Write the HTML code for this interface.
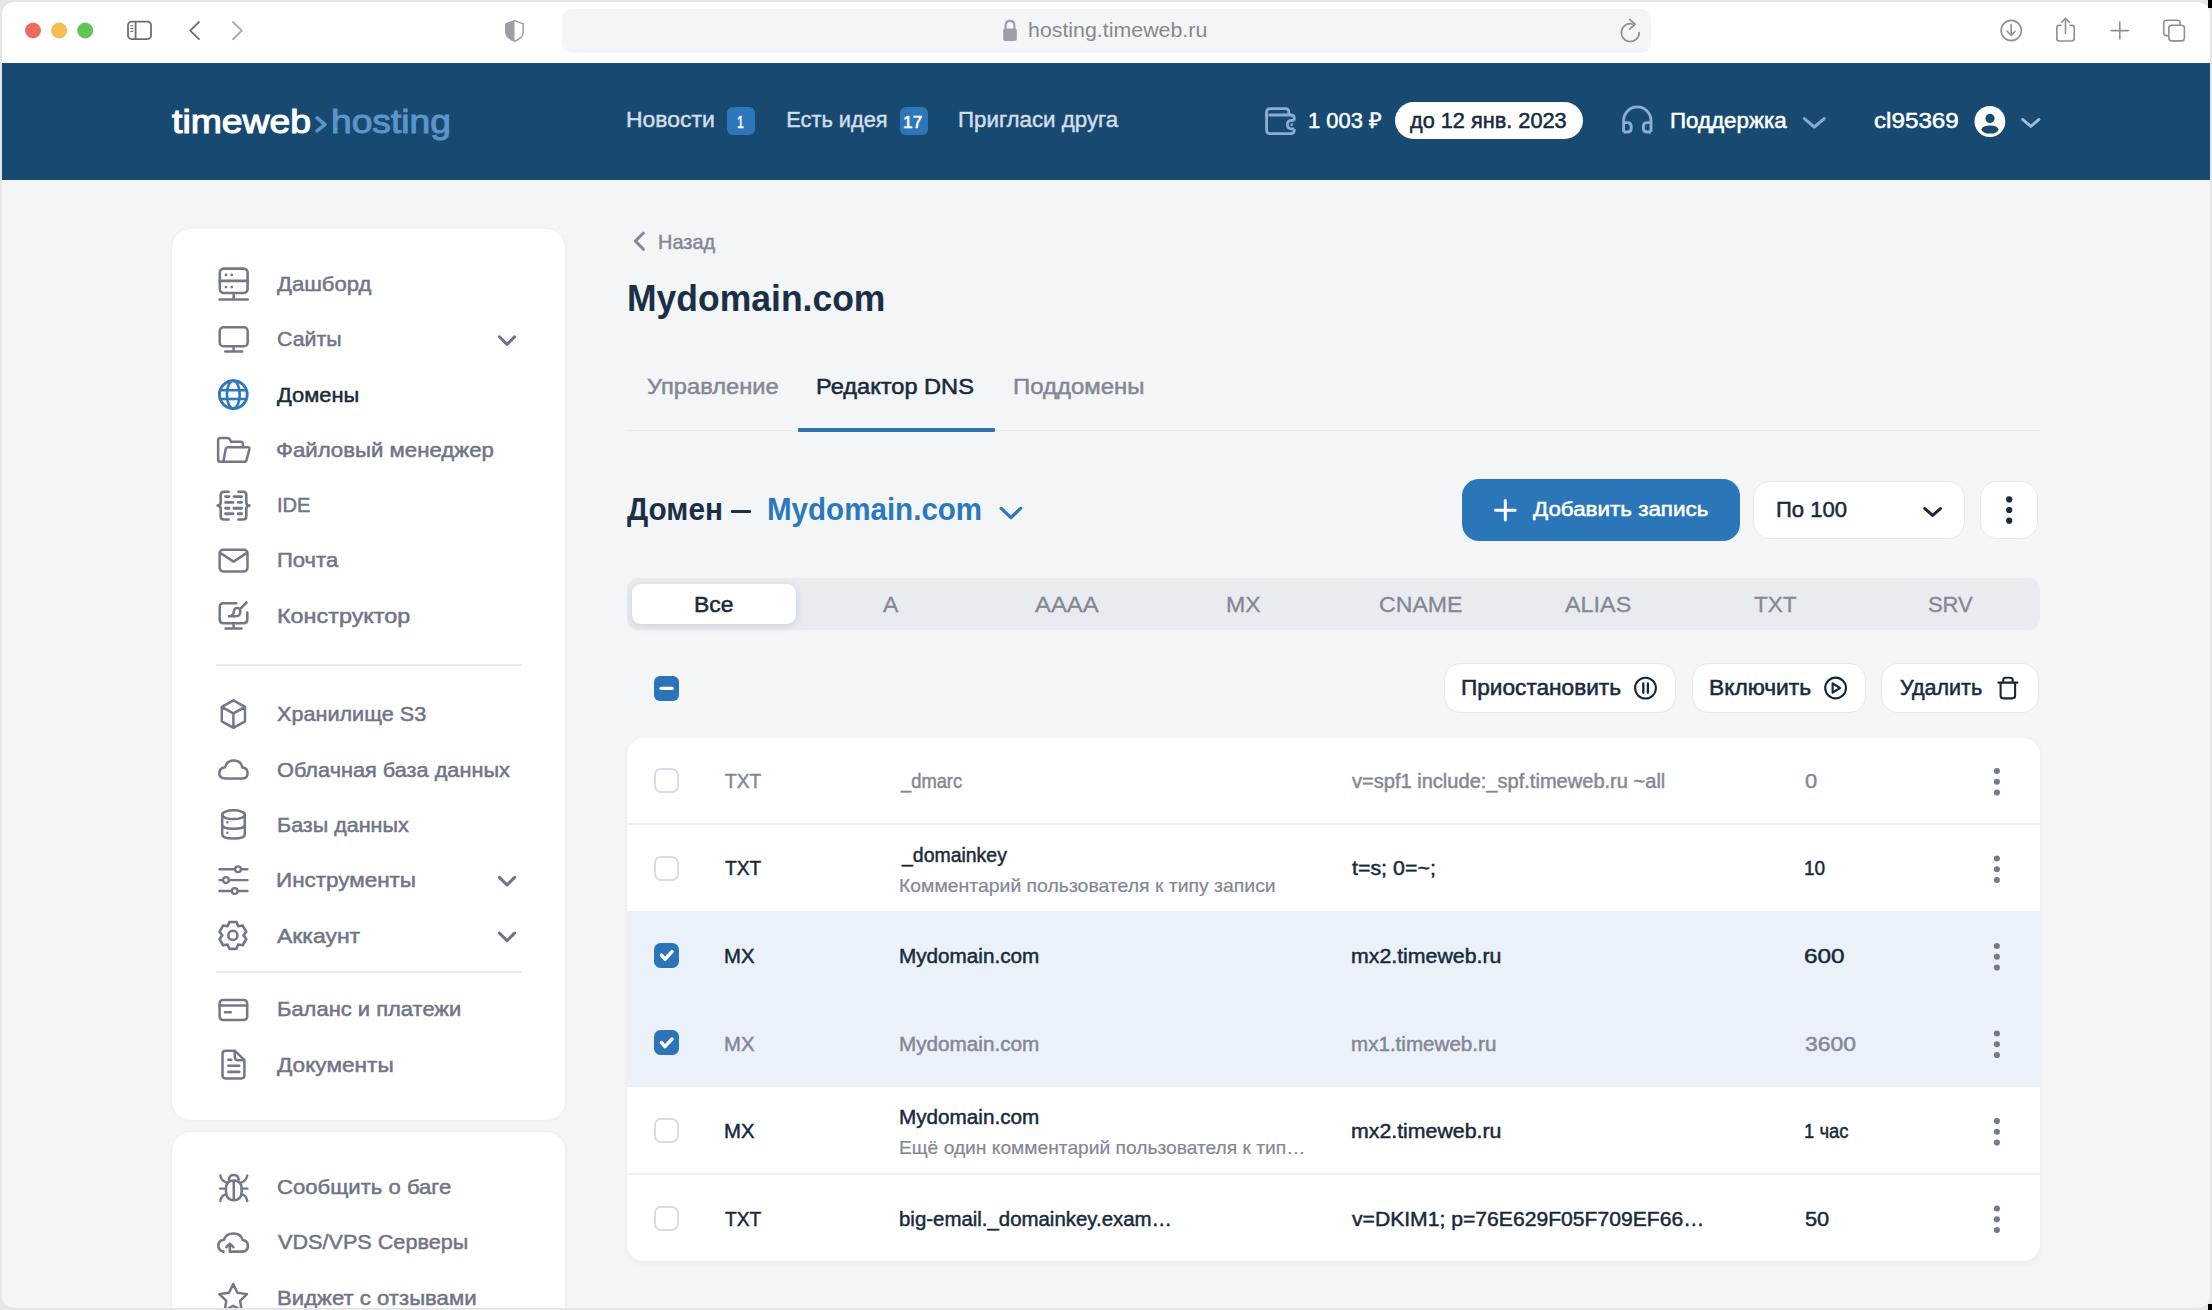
<!DOCTYPE html>
<html><head><meta charset="utf-8"><title>timeweb hosting</title>
<style>
html,body{margin:0;padding:0;}
body{width:2212px;height:1310px;overflow:hidden;background:#e6e6e8;position:relative;font-family:"Liberation Sans",sans-serif;}
.t{position:absolute;white-space:nowrap;transform-origin:0 0;font-family:"Liberation Sans",sans-serif;}
.r{position:absolute;box-sizing:border-box;}
svg.ov{position:absolute;left:0;top:0;}
</style></head><body>
<div class="r" style="left:1.8px;top:1.8px;width:2208.3999999999996px;height:1306.4px;background:#f4f5f7;border-radius:12px;overflow:hidden"></div>
<div class="r" style="left:1.8px;top:1.8px;width:2208.3999999999996px;height:61.2px;background:#ffffff;border-radius:0px;border-radius:12px 12px 0 0"></div>
<div class="r" style="left:2px;top:63px;width:2208px;height:117px;background:#184971;border-radius:0px;"></div>
<div class="r" style="left:562px;top:8.5px;width:1088.5px;height:44.0px;background:#f4f5f7;border-radius:10px;"></div>
<div class="r" style="left:727px;top:107px;width:28px;height:28px;background:#2c76ba;border-radius:6px;"></div>
<div class="r" style="left:900px;top:107px;width:28px;height:28px;background:#2c76ba;border-radius:6px;"></div>
<div class="r" style="left:1395px;top:102.3px;width:188px;height:37.10000000000001px;background:#ffffff;border-radius:18.5px;"></div>
<div class="r" style="left:171.8px;top:228.6px;width:393.7px;height:891.6px;background:#ffffff;border-radius:19px;box-shadow:0 0 4px rgba(20,30,60,0.05)"></div>
<div class="r" style="left:171.8px;top:1131.8px;width:393.7px;height:176.20000000000005px;background:#ffffff;border-radius:0px;border-radius:19px 19px 0 0;box-shadow:0 0 4px rgba(20,30,60,0.05)"></div>
<div class="r" style="left:216px;top:664px;width:306px;height:1.5px;background:#e9eaee;border-radius:0px;"></div>
<div class="r" style="left:216px;top:971px;width:306px;height:1.5px;background:#e9eaee;border-radius:0px;"></div>
<div class="r" style="left:627px;top:429.8px;width:168px;height:1.3999999999999773px;background:#e7e9ed;border-radius:0px;"></div>
<div class="r" style="left:997px;top:429.8px;width:1043px;height:1.3999999999999773px;background:#e7e9ed;border-radius:0px;"></div>
<div class="r" style="left:797.5px;top:428px;width:197.0px;height:3.6000000000000227px;background:#2d72ad;border-radius:1px;"></div>
<div class="r" style="left:731px;top:509.6px;width:19.600000000000023px;height:3.7999999999999545px;background:#1a3047;border-radius:1px;"></div>
<div class="r" style="left:1462.4px;top:479px;width:277.5999999999999px;height:61.799999999999955px;background:#2b76b8;border-radius:17px;"></div>
<div class="r" style="left:1752.5px;top:480.5px;width:212.5px;height:58.39999999999998px;background:#ffffff;border-radius:17px;border:1px solid #e7e9ed"></div>
<div class="r" style="left:1980px;top:480.5px;width:58.40000000000009px;height:58.39999999999998px;background:#ffffff;border-radius:17px;border:1px solid #e7e9ed"></div>
<div class="r" style="left:627px;top:578px;width:1413px;height:51.5px;background:#e8ebf0;border-radius:11px;"></div>
<div class="r" style="left:631.5px;top:584px;width:164.0px;height:39.5px;background:#ffffff;border-radius:9px;box-shadow:0 2px 8px rgba(30,40,60,0.13)"></div>
<div class="r" style="left:654px;top:675.5px;width:25.200000000000045px;height:25.5px;background:#2b74b8;border-radius:6px;"></div>
<div class="r" style="left:1443.7px;top:662.8px;width:232.29999999999995px;height:50.40000000000009px;background:#ffffff;border-radius:17px;border:1px solid #e7e9ed"></div>
<div class="r" style="left:1691.8px;top:662.8px;width:174.0px;height:50.40000000000009px;background:#ffffff;border-radius:17px;border:1px solid #e7e9ed"></div>
<div class="r" style="left:1881.3px;top:662.8px;width:157.29999999999995px;height:50.40000000000009px;background:#ffffff;border-radius:17px;border:1px solid #e7e9ed"></div>
<div class="r" style="left:626.5px;top:737.8px;width:1413.5px;height:523.2px;background:#ffffff;border-radius:17px;box-shadow:0 2px 6px rgba(20,30,60,0.05)"></div>
<div class="r" style="left:627px;top:910.6px;width:1413px;height:176.80000000000007px;background:#eaf1f8;border-radius:0px;"></div>
<div class="r" style="left:627px;top:823.4px;width:1413px;height:1.2000000000000455px;background:#eef0f3;border-radius:0px;"></div>
<div class="r" style="left:627px;top:1173.4px;width:1413px;height:1.199999999999818px;background:#eef0f3;border-radius:0px;"></div>
<div class="r" style="left:654px;top:767.8px;width:25px;height:25.0px;background:#ffffff;border-radius:7px;border:2px solid #d9dce1"></div>
<div class="r" style="left:654px;top:855.5px;width:25px;height:25.0px;background:#ffffff;border-radius:7px;border:2px solid #d9dce1"></div>
<div class="r" style="left:654px;top:1118.0px;width:25px;height:25.0px;background:#ffffff;border-radius:7px;border:2px solid #d9dce1"></div>
<div class="r" style="left:654px;top:1205.5px;width:25px;height:25.0px;background:#ffffff;border-radius:7px;border:2px solid #d9dce1"></div>
<div class="r" style="left:654px;top:942.5px;width:25.399999999999977px;height:25.59999999999991px;background:#2b74b8;border-radius:6.5px;"></div>
<div class="r" style="left:654px;top:1029.9px;width:25.399999999999977px;height:25.59999999999991px;background:#2b74b8;border-radius:6.5px;"></div>
<div class="t" style="left:1028.22px;top:18.10px;font-size:19.8px;line-height:24px;color:#86888f;transform:scaleX(1.0797);">hosting.timeweb.ru</div>
<div class="t" style="left:171.85px;top:101.50px;font-size:33px;line-height:40px;color:#ffffff;-webkit-text-stroke:1.1px #ffffff;transform:scaleX(1.1323);">timeweb</div>
<div class="t" style="left:330.75px;top:101.50px;font-size:33px;line-height:40px;color:#5b95ca;-webkit-text-stroke:1.0px #5b95ca;transform:scaleX(1.1265);">hosting</div>
<div class="t" style="left:626.17px;top:107.00px;font-size:21.8px;line-height:26px;color:#d2dde9;-webkit-text-stroke:0.45px #d2dde9;transform:scaleX(1.0529);">Новости</div>
<div class="t" style="left:736.92px;top:111.50px;font-size:16.5px;line-height:20px;color:#ffffff;-webkit-text-stroke:0.55px #ffffff;transform:scaleX(0.7563);">1</div>
<div class="t" style="left:786.23px;top:107.00px;font-size:21.8px;line-height:26px;color:#d2dde9;-webkit-text-stroke:0.45px #d2dde9;">Есть идея</div>
<div class="t" style="left:902.92px;top:111.50px;font-size:16.5px;line-height:20px;color:#ffffff;-webkit-text-stroke:0.55px #ffffff;transform:scaleX(1.0509);">17</div>
<div class="t" style="left:958.20px;top:107.00px;font-size:21.8px;line-height:26px;color:#d2dde9;-webkit-text-stroke:0.45px #d2dde9;transform:scaleX(1.0229);">Пригласи друга</div>
<div class="t" style="left:1307.74px;top:108.00px;font-size:21.8px;line-height:26px;color:#ffffff;-webkit-text-stroke:0.5px #ffffff;transform:scaleX(1.0056);">1 003 ₽</div>
<div class="t" style="left:1410.25px;top:108.00px;font-size:21.8px;line-height:26px;color:#172a3b;-webkit-text-stroke:0.5px #172a3b;transform:scaleX(0.9962);">до 12 янв. 2023</div>
<div class="t" style="left:1669.89px;top:107.80px;font-size:21.2px;line-height:25px;color:#ffffff;-webkit-text-stroke:0.5px #ffffff;transform:scaleX(1.0552);">Поддержка</div>
<div class="t" style="left:1873.85px;top:107.80px;font-size:21.2px;line-height:25px;color:#ffffff;-webkit-text-stroke:0.5px #ffffff;transform:scaleX(1.1425);">cl95369</div>
<div class="t" style="left:276.65px;top:270.90px;font-size:21px;line-height:25px;color:#707487;-webkit-text-stroke:0.5px #707487;transform:scaleX(1.0496);">Дашборд</div>
<div class="t" style="left:276.53px;top:326.20px;font-size:21px;line-height:25px;color:#707487;-webkit-text-stroke:0.5px #707487;transform:scaleX(1.0158);">Сайты</div>
<div class="t" style="left:276.55px;top:381.50px;font-size:21px;line-height:25px;color:#172a3b;-webkit-text-stroke:0.5px #172a3b;transform:scaleX(1.0430);">Домены</div>
<div class="t" style="left:276.19px;top:436.80px;font-size:21px;line-height:25px;color:#707487;-webkit-text-stroke:0.5px #707487;transform:scaleX(1.0579);">Файловый менеджер</div>
<div class="t" style="left:276.59px;top:492.10px;font-size:21px;line-height:25px;color:#707487;-webkit-text-stroke:0.5px #707487;transform:scaleX(0.9559);">IDE</div>
<div class="t" style="left:277.00px;top:547.40px;font-size:21px;line-height:25px;color:#707487;-webkit-text-stroke:0.5px #707487;transform:scaleX(1.0497);">Почта</div>
<div class="t" style="left:276.94px;top:602.70px;font-size:21px;line-height:25px;color:#707487;-webkit-text-stroke:0.5px #707487;transform:scaleX(1.1130);">Конструктор</div>
<div class="t" style="left:277.25px;top:701.20px;font-size:21px;line-height:25px;color:#707487;-webkit-text-stroke:0.5px #707487;transform:scaleX(1.0295);">Хранилище S3</div>
<div class="t" style="left:276.52px;top:756.55px;font-size:21px;line-height:25px;color:#707487;-webkit-text-stroke:0.5px #707487;transform:scaleX(1.0344);">Облачная база данных</div>
<div class="t" style="left:276.53px;top:811.90px;font-size:21px;line-height:25px;color:#707487;-webkit-text-stroke:0.5px #707487;transform:scaleX(1.0250);">Базы данных</div>
<div class="t" style="left:276.48px;top:867.25px;font-size:21px;line-height:25px;color:#707487;-webkit-text-stroke:0.5px #707487;transform:scaleX(1.0687);">Инструменты</div>
<div class="t" style="left:277.25px;top:922.60px;font-size:21px;line-height:25px;color:#707487;-webkit-text-stroke:0.5px #707487;transform:scaleX(1.0932);">Аккаунт</div>
<div class="t" style="left:276.50px;top:996.00px;font-size:21px;line-height:25px;color:#707487;-webkit-text-stroke:0.5px #707487;transform:scaleX(1.0452);">Баланс и платежи</div>
<div class="t" style="left:276.55px;top:1051.60px;font-size:21px;line-height:25px;color:#707487;-webkit-text-stroke:0.5px #707487;transform:scaleX(1.0779);">Документы</div>
<div class="t" style="left:276.50px;top:1174.10px;font-size:21px;line-height:25px;color:#707487;-webkit-text-stroke:0.5px #707487;transform:scaleX(1.0519);">Сообщить о баге</div>
<div class="t" style="left:277.55px;top:1229.45px;font-size:21px;line-height:25px;color:#707487;-webkit-text-stroke:0.5px #707487;transform:scaleX(1.0296);">VDS/VPS Серверы</div>
<div class="t" style="left:276.50px;top:1284.80px;font-size:21px;line-height:25px;color:#707487;-webkit-text-stroke:0.5px #707487;transform:scaleX(1.0549);">Виджет с отзывами</div>
<div class="t" style="left:657.82px;top:229.50px;font-size:19.8px;line-height:24px;color:#848795;-webkit-text-stroke:0.45px #848795;transform:scaleX(1.0074);">Назад</div>
<div class="t" style="left:627.00px;top:275.90px;font-size:37.4px;line-height:45px;color:#1a3047;font-weight:700;transform:scaleX(0.9496);">Mydomain.com</div>
<div class="t" style="left:646.52px;top:373.50px;font-size:21.5px;line-height:26px;color:#848795;-webkit-text-stroke:0.45px #848795;transform:scaleX(1.1019);">Управление</div>
<div class="t" style="left:816.05px;top:373.50px;font-size:21.5px;line-height:26px;color:#172a3b;-webkit-text-stroke:0.5px #172a3b;transform:scaleX(1.0969);">Редактор DNS</div>
<div class="t" style="left:1012.51px;top:373.50px;font-size:21.5px;line-height:26px;color:#848795;-webkit-text-stroke:0.45px #848795;transform:scaleX(1.1146);">Поддомены</div>
<div class="t" style="left:627.20px;top:491.20px;font-size:30.8px;line-height:37px;color:#1a3047;font-weight:700;transform:scaleX(0.9669);">Домен</div>
<div class="t" style="left:766.58px;top:491.20px;font-size:30.8px;line-height:37px;color:#2b78bd;font-weight:700;transform:scaleX(0.9598);">Mydomain.com</div>
<div class="t" style="left:1533.48px;top:496.40px;font-size:20.8px;line-height:25px;color:#ffffff;-webkit-text-stroke:0.55px #ffffff;transform:scaleX(1.0764);">Добавить запись</div>
<div class="t" style="left:1775.74px;top:497.00px;font-size:21.8px;line-height:26px;color:#172a3b;-webkit-text-stroke:0.5px #172a3b;transform:scaleX(1.0132);">По 100</div>
<div class="t" style="left:693.51px;top:592.00px;font-size:22px;line-height:26px;color:#172a3b;-webkit-text-stroke:0.5px #172a3b;transform:scaleX(1.0389);">Все</div>
<div class="t" style="left:882.55px;top:592.00px;font-size:22px;line-height:26px;color:#848795;-webkit-text-stroke:0.3px #848795;transform:scaleX(1.0467);">A</div>
<div class="t" style="left:1035.35px;top:592.00px;font-size:22px;line-height:26px;color:#848795;-webkit-text-stroke:0.3px #848795;transform:scaleX(1.0860);">AAAA</div>
<div class="t" style="left:1226.30px;top:592.00px;font-size:22px;line-height:26px;color:#848795;-webkit-text-stroke:0.3px #848795;transform:scaleX(1.0487);">MX</div>
<div class="t" style="left:1379.10px;top:592.00px;font-size:22px;line-height:26px;color:#848795;-webkit-text-stroke:0.3px #848795;transform:scaleX(1.0505);">CNAME</div>
<div class="t" style="left:1565.15px;top:592.00px;font-size:22px;line-height:26px;color:#848795;-webkit-text-stroke:0.3px #848795;transform:scaleX(1.0633);">ALIAS</div>
<div class="t" style="left:1753.65px;top:592.00px;font-size:22px;line-height:26px;color:#848795;-webkit-text-stroke:0.3px #848795;transform:scaleX(1.0192);">TXT</div>
<div class="t" style="left:1927.95px;top:592.00px;font-size:22px;line-height:26px;color:#848795;-webkit-text-stroke:0.3px #848795;">SRV</div>
<div class="t" style="left:1460.90px;top:675.00px;font-size:21.5px;line-height:26px;color:#172a3b;-webkit-text-stroke:0.5px #172a3b;transform:scaleX(1.0524);">Приостановить</div>
<div class="t" style="left:1708.69px;top:675.00px;font-size:21.5px;line-height:26px;color:#172a3b;-webkit-text-stroke:0.5px #172a3b;transform:scaleX(1.0583);">Включить</div>
<div class="t" style="left:1899.85px;top:675.00px;font-size:21.5px;line-height:26px;color:#172a3b;-webkit-text-stroke:0.5px #172a3b;transform:scaleX(1.0014);">Удалить</div>
<div class="t" style="left:725.23px;top:769.00px;font-size:19.6px;line-height:24px;color:#848795;-webkit-text-stroke:0.45px #848795;transform:scaleX(0.9787);">TXT</div>
<div class="t" style="left:901.46px;top:769.00px;font-size:19.6px;line-height:24px;color:#848795;-webkit-text-stroke:0.45px #848795;transform:scaleX(0.9356);">_dmarc</div>
<div class="t" style="left:1352.22px;top:769.00px;font-size:19.6px;line-height:24px;color:#848795;-webkit-text-stroke:0.45px #848795;transform:scaleX(1.0237);">v=spf1 include:_spf.timeweb.ru ~all</div>
<div class="t" style="left:1805.22px;top:769.00px;font-size:19.6px;line-height:24px;color:#848795;-webkit-text-stroke:0.45px #848795;transform:scaleX(1.1227);">0</div>
<div class="t" style="left:725.23px;top:856.00px;font-size:19.6px;line-height:24px;color:#172a3b;-webkit-text-stroke:0.45px #172a3b;transform:scaleX(0.9787);">TXT</div>
<div class="t" style="left:901.52px;top:842.50px;font-size:19.6px;line-height:24px;color:#172a3b;-webkit-text-stroke:0.45px #172a3b;transform:scaleX(0.9925);">_domainkey</div>
<div class="t" style="left:899.30px;top:875.60px;font-size:17.7px;line-height:21px;color:#848795;-webkit-text-stroke:0.2px #848795;transform:scaleX(1.0971);">Комментарий пользователя к типу записи</div>
<div class="t" style="left:1352.22px;top:856.00px;font-size:19.6px;line-height:24px;color:#172a3b;-webkit-text-stroke:0.45px #172a3b;transform:scaleX(1.0915);">t=s; 0=~;</div>
<div class="t" style="left:1804.25px;top:856.00px;font-size:19.6px;line-height:24px;color:#172a3b;-webkit-text-stroke:0.45px #172a3b;transform:scaleX(0.9738);">10</div>
<div class="t" style="left:724.19px;top:944.00px;font-size:19.6px;line-height:24px;color:#172a3b;-webkit-text-stroke:0.45px #172a3b;transform:scaleX(1.0363);">MX</div>
<div class="t" style="left:899.47px;top:944.00px;font-size:19.6px;line-height:24px;color:#172a3b;-webkit-text-stroke:0.45px #172a3b;transform:scaleX(1.0557);">Mydomain.com</div>
<div class="t" style="left:1351.14px;top:944.00px;font-size:19.6px;line-height:24px;color:#172a3b;-webkit-text-stroke:0.45px #172a3b;transform:scaleX(1.0877);">mx2.timeweb.ru</div>
<div class="t" style="left:1803.98px;top:944.00px;font-size:19.6px;line-height:24px;color:#172a3b;-webkit-text-stroke:0.45px #172a3b;transform:scaleX(1.2439);">600</div>
<div class="t" style="left:724.19px;top:1032.00px;font-size:19.6px;line-height:24px;color:#848795;-webkit-text-stroke:0.45px #848795;transform:scaleX(1.0363);">MX</div>
<div class="t" style="left:899.47px;top:1032.00px;font-size:19.6px;line-height:24px;color:#848795;-webkit-text-stroke:0.45px #848795;transform:scaleX(1.0557);">Mydomain.com</div>
<div class="t" style="left:1351.17px;top:1032.00px;font-size:19.6px;line-height:24px;color:#848795;-webkit-text-stroke:0.45px #848795;transform:scaleX(1.0510);">mx1.timeweb.ru</div>
<div class="t" style="left:1805.22px;top:1032.00px;font-size:19.6px;line-height:24px;color:#848795;-webkit-text-stroke:0.45px #848795;transform:scaleX(1.1707);">3600</div>
<div class="t" style="left:724.19px;top:1119.30px;font-size:19.6px;line-height:24px;color:#172a3b;-webkit-text-stroke:0.45px #172a3b;transform:scaleX(1.0363);">MX</div>
<div class="t" style="left:899.47px;top:1105.40px;font-size:19.6px;line-height:24px;color:#172a3b;-webkit-text-stroke:0.45px #172a3b;transform:scaleX(1.0557);">Mydomain.com</div>
<div class="t" style="left:899.31px;top:1138.40px;font-size:17.7px;line-height:21px;color:#848795;-webkit-text-stroke:0.2px #848795;transform:scaleX(1.0861);">Ещё один комментарий пользователя к тип…</div>
<div class="t" style="left:1351.14px;top:1119.30px;font-size:19.6px;line-height:24px;color:#172a3b;-webkit-text-stroke:0.45px #172a3b;transform:scaleX(1.0877);">mx2.timeweb.ru</div>
<div class="t" style="left:1804.28px;top:1119.30px;font-size:19.6px;line-height:24px;color:#172a3b;-webkit-text-stroke:0.45px #172a3b;transform:scaleX(0.9419);">1 час</div>
<div class="t" style="left:725.23px;top:1206.80px;font-size:19.6px;line-height:24px;color:#172a3b;-webkit-text-stroke:0.45px #172a3b;transform:scaleX(0.9787);">TXT</div>
<div class="t" style="left:899.48px;top:1206.80px;font-size:19.6px;line-height:24px;color:#172a3b;-webkit-text-stroke:0.45px #172a3b;transform:scaleX(1.0416);">big-email._domainkey.exam…</div>
<div class="t" style="left:1352.22px;top:1206.80px;font-size:19.6px;line-height:24px;color:#172a3b;-webkit-text-stroke:0.45px #172a3b;transform:scaleX(1.0783);">v=DKIM1; p=76E629F05F709EF66…</div>
<div class="t" style="left:1805.22px;top:1206.80px;font-size:19.6px;line-height:24px;color:#172a3b;-webkit-text-stroke:0.45px #172a3b;transform:scaleX(1.1120);">50</div>
<svg class="ov" width="2212" height="1310" viewBox="0 0 2212 1310"><circle cx="33" cy="30.5" r="7.6" fill="#ed6a5e" stroke="#d9574b" stroke-width="0.6"/><circle cx="59.2" cy="30.5" r="7.6" fill="#f5bf4f" stroke="#dea53a" stroke-width="0.6"/><circle cx="85.2" cy="30.5" r="7.6" fill="#61c554" stroke="#50a843" stroke-width="0.6"/><rect x="128" y="21.6" width="23" height="17.4" rx="3.6" fill="none" stroke="#6b6c70" stroke-width="1.75"/><line x1="135.6" y1="21.6" x2="135.6" y2="39" stroke="#6b6c70" stroke-width="1.75"/><line x1="130.3" y1="25.6" x2="133.3" y2="25.6" stroke="#6b6c70" stroke-width="1.1"/><line x1="130.3" y1="28.5" x2="133.3" y2="28.5" stroke="#6b6c70" stroke-width="1.1"/><line x1="130.3" y1="31.4" x2="133.3" y2="31.4" stroke="#6b6c70" stroke-width="1.1"/><polyline points="199,22 190.2,30.6 199,39.2" fill="none" stroke="#6b6c70" stroke-width="1.75" stroke-linecap="round" stroke-linejoin="round"/><polyline points="233,22 241.8,30.6 233,39.2" fill="none" stroke="#aaaaab" stroke-width="1.9" stroke-linecap="round" stroke-linejoin="round"/><path d="M514.5,20.6 L523.2,23.9 V32 Q523.2,37.8 514.5,41.3 Q505.8,37.8 505.8,32 V23.9 Z" fill="none" stroke="#9c9ea8" stroke-width="1.5" stroke-linejoin="round"/><path d="M514.5,20.6 L505.8,23.9 V32 Q505.8,37.8 514.5,41.3 Z" fill="#9c9ea8"/><rect x="1003.2" y="28.6" width="13.6" height="12.4" rx="2" fill="#9c9ea8"/><path d="M1005.6,29 V25.5 Q1005.6,20.9 1010,20.9 Q1014.4,20.9 1014.4,25.5 V29" fill="none" stroke="#9c9ea8" stroke-width="2.1"/><path d="M1639.2,32.6 A8.9,8.9 0 1 1 1632.8,24.1" fill="none" stroke="#8f9092" stroke-width="1.7" stroke-linecap="round"/><polyline points="1629.6,19.4 1635.2,24.2 1629.6,29.2" fill="none" stroke="#8f9092" stroke-width="1.7" stroke-linecap="round" stroke-linejoin="round"/><circle cx="2011.2" cy="30.5" r="10.1" fill="none" stroke="#8f9092" stroke-width="1.6"/><line x1="2011.2" y1="24.2" x2="2011.2" y2="35.5" stroke="#8f9092" stroke-width="1.6" stroke-linecap="round"/><polyline points="2007.2,31.3 2011.2,35.5 2015.2,31.3" fill="none" stroke="#8f9092" stroke-width="1.6" stroke-linecap="round" stroke-linejoin="round"/><path d="M2061,25.3 H2059.2 Q2056.8,25.3 2056.8,27.7 V38.6 Q2056.8,41 2059.2,41 H2071.8 Q2074.2,41 2074.2,38.6 V27.7 Q2074.2,25.3 2071.8,25.3 H2070" fill="none" stroke="#8f9092" stroke-width="1.6" stroke-linecap="round"/><line x1="2065.5" y1="18.5" x2="2065.5" y2="33.5" stroke="#8f9092" stroke-width="1.6" stroke-linecap="round"/><polyline points="2061.6,22.3 2065.5,18.4 2069.4,22.3" fill="none" stroke="#8f9092" stroke-width="1.6" stroke-linecap="round" stroke-linejoin="round"/><line x1="2111.3" y1="30.6" x2="2128.3" y2="30.6" stroke="#8f9092" stroke-width="1.6" stroke-linecap="round"/><line x1="2119.8" y1="22" x2="2119.8" y2="39" stroke="#8f9092" stroke-width="1.6" stroke-linecap="round"/><rect x="2163.7" y="20.2" width="16.4" height="15.4" rx="2.8" fill="none" stroke="#8f9092" stroke-width="1.6"/><rect x="2168.8" y="25.3" width="15.6" height="15.6" rx="2.8" fill="#ffffff" stroke="#8f9092" stroke-width="1.6"/><polyline points="317,117.8 325,124.3 317,130.8" fill="none" stroke="#5b95ca" stroke-width="3.6" stroke-linecap="round" stroke-linejoin="round"/><path d="M1266.6,117 V112 Q1266.6,108.6 1270,108.6 H1285.4 Q1288.8,108.6 1288.8,112 V115" fill="none" stroke="#89aed3" stroke-width="2.8" stroke-linejoin="round"/><path d="M1266.6,112 V130.2 Q1266.6,133.6 1270,133.6 H1290.8 Q1294.3,133.6 1294.3,130.2 V129 M1294.3,120.6 V118.4 Q1294.3,115 1290.8,115 H1268.5" fill="none" stroke="#89aed3" stroke-width="2.8" stroke-linejoin="round"/><path d="M1294.3,120.4 H1291.4 Q1287.4,120.4 1287.4,124.6 Q1287.4,128.8 1291.4,128.8 H1294.3" fill="none" stroke="#89aed3" stroke-width="2.8"/><circle cx="1291.8" cy="124.6" r="1.4" fill="#89aed3"/><path d="M1623.6,132 V120.6 A13.7,13.7 0 0 1 1651,120.6 V132" fill="none" stroke="#89aed3" stroke-width="2.9"/><path d="M1623.6,122.6 H1627.4 Q1631.2,122.6 1631.2,126.4 V128.2 Q1631.2,132 1627.4,132 H1623.6" fill="none" stroke="#89aed3" stroke-width="2.9"/><path d="M1651,122.6 H1647.2 Q1643.4,122.6 1643.4,126.4 V128.2 Q1643.4,132 1647.2,132 H1651" fill="none" stroke="#89aed3" stroke-width="2.9"/><polyline points="1804.3,118.6 1814.3,127 1824.3,118.6" fill="none" stroke="#85abd1" stroke-width="3" stroke-linecap="round" stroke-linejoin="round"/><circle cx="1989.9" cy="121.5" r="15.4" fill="#ffffff"/><circle cx="1990" cy="118.4" r="4.6" fill="#184971"/><ellipse cx="1990" cy="129.5" rx="8.4" ry="4.1" fill="#184971"/><polyline points="2022.6,119.4 2030.8,126.4 2039,119.4" fill="none" stroke="#a0bedb" stroke-width="2.8" stroke-linecap="round" stroke-linejoin="round"/><rect x="219.8" y="268.6" width="27.8" height="24.4" rx="4" fill="none" stroke="#747789" stroke-width="2.6"/><path d="M219.8,280.8 H247.6" fill="none" stroke="#747789" stroke-width="2.8" stroke-linecap="round" stroke-linejoin="round"/><path d="M233.7,293 V299.5 M219.6,299.5 H247.8" fill="none" stroke="#747789" stroke-width="2.6" stroke-linecap="round" stroke-linejoin="round"/><circle cx="226" cy="274.9" r="1.45" fill="#747789"/><circle cx="226" cy="287.1" r="1.45" fill="#747789"/><circle cx="231.7" cy="274.9" r="1.45" fill="#747789"/><circle cx="231.7" cy="287.1" r="1.45" fill="#747789"/><rect x="219.7" y="327.3" width="28" height="19" rx="3.8" fill="none" stroke="#747789" stroke-width="2.5"/><path d="M233.7,346.5 V351.5 M225.2,351.5 H242.2" fill="none" stroke="#747789" stroke-width="2.5" stroke-linecap="round" stroke-linejoin="round"/><circle cx="233.3" cy="394.6" r="13.9" fill="none" stroke="#2b78bd" stroke-width="2.9"/><ellipse cx="233.3" cy="394.6" rx="6.4" ry="13.9" fill="none" stroke="#2b78bd" stroke-width="2.6"/><line x1="220" y1="390.2" x2="246.6" y2="390.2" stroke="#2b78bd" stroke-width="2.6"/><line x1="220" y1="399" x2="246.6" y2="399" stroke="#2b78bd" stroke-width="2.6"/><path d="M218.1,459.4 V440.3 Q218.1,437.9 220.5,437.9 H227.6 Q229.2,437.9 230,439.5 L231,441.7 H240.4 Q243,441.7 243,444.3 V447" fill="none" stroke="#747789" stroke-width="2.5" stroke-linecap="round" stroke-linejoin="round"/><path d="M223.3,461.8 L225.8,448.8 Q226.1,447.2 227.7,447.2 H247.8 Q249.8,447.2 249.4,449.1 L246.6,459.9 Q246.1,461.8 244.2,461.8 H220.5 Q218.1,461.8 218.1,459.4" fill="none" stroke="#747789" stroke-width="2.5" stroke-linecap="round" stroke-linejoin="round"/><path d="M228.6,491.7 H223.9 Q220.7,491.7 220.7,494.9 V502.2 Q220.7,505.4 217.6,505.6 Q220.7,505.8 220.7,509 V516.3 Q220.7,519.5 223.9,519.5 H228.6" fill="none" stroke="#747789" stroke-width="2.6" stroke-linecap="round" stroke-linejoin="round"/><path d="M238.4,491.7 H243.1 Q246.3,491.7 246.3,494.9 V502.2 Q246.3,505.4 249.4,505.6 Q246.3,505.8 246.3,509 V516.3 Q246.3,519.5 243.1,519.5 H238.4" fill="none" stroke="#747789" stroke-width="2.6" stroke-linecap="round" stroke-linejoin="round"/><path d="M225.6,496.6 H229 M234,496.6 H241.6 M225.6,502.4 H233 M238.2,502.4 H241.6 M225.6,508.2 H229 M234,508.2 H241.6 M225.6,513.8 H233 M238.2,513.8 H241.6" fill="none" stroke="#747789" stroke-width="2.9" stroke-linecap="round" stroke-linejoin="round"/><rect x="219.6" y="549.8" width="27.9" height="21.6" rx="3.6" fill="none" stroke="#747789" stroke-width="2.5"/><path d="M221.3,553.6 L233.5,561.6 L245.8,553.6" fill="none" stroke="#747789" stroke-width="2.5" stroke-linecap="round" stroke-linejoin="round"/><path d="M236.3,603.2 H223.4 Q219.7,603.2 219.7,606.9 V619.6 Q219.7,623.3 223.4,623.3 H243.6 Q247.3,623.3 247.3,619.6 V612.6" fill="none" stroke="#747789" stroke-width="2.5" stroke-linecap="round" stroke-linejoin="round"/><path d="M233.6,623.3 V628.4 M225.6,628.4 H241.6" fill="none" stroke="#747789" stroke-width="2.5" stroke-linecap="round" stroke-linejoin="round"/><path d="M246.5,602.5 L240.9,608.1" fill="none" stroke="#747789" stroke-width="2.6" stroke-linecap="round" stroke-linejoin="round"/><path d="M229,616.3 H235.6 Q240.4,616.3 240.4,611.6 Q240.4,608 237.2,608 Q234,608 233.8,611.6 Q233.6,616.1 229,616.3" fill="none" stroke="#747789" stroke-width="2.4" stroke-linecap="round" stroke-linejoin="round"/><path d="M233.4,700.3 L245,706.8 V721.3 L233.4,727.8 L221.8,721.3 V706.8 Z M221.8,706.8 L233.4,713.4 L245,706.8 M233.4,713.4 V727.8" fill="none" stroke="#747789" stroke-width="2.5" stroke-linecap="round" stroke-linejoin="round"/><path d="M225.6,778.6 H241.8 Q247.6,778.6 247.6,773 Q247.6,767.8 242.3,767.4 Q241,760.6 233.6,760.6 Q226.8,760.6 225.1,767.3 Q219.3,768 219.3,773.1 Q219.3,778.6 225.6,778.6 Z" fill="none" stroke="#747789" stroke-width="2.5" stroke-linecap="round" stroke-linejoin="round"/><ellipse cx="233.5" cy="814.7" rx="11.3" ry="4.4" fill="none" stroke="#747789" stroke-width="2.5"/><path d="M222.2,814.7 V834.3 Q222.2,838.6 233.5,838.6 Q244.8,838.6 244.8,834.3 V814.7 M222.2,824.5 Q222.2,828.8 233.5,828.8 Q244.8,828.8 244.8,824.5" fill="none" stroke="#747789" stroke-width="2.5" stroke-linecap="round" stroke-linejoin="round"/><circle cx="227.3" cy="822.3" r="1.2" fill="#747789"/><circle cx="227.3" cy="832.8" r="1.2" fill="#747789"/><path d="M219.5,869.3 H247.5 M219.5,880.1 H247.5 M219.5,891 H247.5" fill="none" stroke="#747789" stroke-width="2.4" stroke-linecap="round" stroke-linejoin="round"/><circle cx="238" cy="869.3" r="2.9" fill="#ffffff" stroke="#747789" stroke-width="2.3"/><circle cx="226" cy="880.1" r="2.9" fill="#ffffff" stroke="#747789" stroke-width="2.3"/><circle cx="234.7" cy="891" r="2.9" fill="#ffffff" stroke="#747789" stroke-width="2.3"/><path d="M499.4,336.8 L507,344.40000000000003 L514.6,336.8" fill="none" stroke="#6e7287" stroke-width="3" stroke-linecap="round" stroke-linejoin="round"/><path d="M499.4,877.4000000000001 L507,885.0 L514.6,877.4000000000001" fill="none" stroke="#6e7287" stroke-width="3" stroke-linecap="round" stroke-linejoin="round"/><path d="M499.4,933.1 L507,940.6999999999999 L514.6,933.1" fill="none" stroke="#6e7287" stroke-width="3" stroke-linecap="round" stroke-linejoin="round"/><path d="M227.60,926.22 L229.30,921.97 L236.50,921.97 L238.20,926.22 L242.73,925.57 L246.33,931.80 L243.50,935.40 L246.33,939.00 L242.73,945.23 L238.20,944.58 L236.50,948.83 L229.30,948.83 L227.60,944.58 L223.07,945.23 L219.47,939.00 L222.30,935.40 L219.47,931.80 L223.07,925.57 Z" fill="none" stroke="#747789" stroke-width="2.6" stroke-linecap="round" stroke-linejoin="round"/><circle cx="232.9" cy="935.4" r="4.6" fill="none" stroke="#747789" stroke-width="2.6"/><rect x="219.6" y="1000" width="27.6" height="20" rx="3.4" fill="none" stroke="#747789" stroke-width="2.5"/><path d="M219.8,1005.4 H247.2 M225,1012.3 H230.8" fill="none" stroke="#747789" stroke-width="2.5" stroke-linecap="round" stroke-linejoin="round"/><path d="M234.8,1050.7 H225.6 Q222.5,1050.7 222.5,1053.8 V1075.3 Q222.5,1078.4 225.6,1078.4 H241.3 Q244.4,1078.4 244.4,1075.3 V1060.2 Z M234.8,1050.7 V1057 Q234.8,1060.2 238,1060.2 H244.4" fill="none" stroke="#747789" stroke-width="2.5" stroke-linecap="round" stroke-linejoin="round"/><path d="M228.4,1059.7 H231.2 M228.4,1065.8 H239.2 M228.4,1071.9 H239.2" fill="none" stroke="#747789" stroke-width="2.6" stroke-linecap="round" stroke-linejoin="round"/><path d="M226,1188.6 Q226,1180.4 233.8,1180.4 Q241.6,1180.4 241.6,1188.6 V1191.6 Q241.6,1200.2 233.8,1200.2 Q226,1200.2 226,1191.6 Z" fill="none" stroke="#747789" stroke-width="2.5" stroke-linecap="round" stroke-linejoin="round"/><path d="M228.9,1179.6 Q229.4,1175 233.8,1175 Q238.2,1175 238.7,1179.6 M233.8,1181.5 V1199.6" fill="none" stroke="#747789" stroke-width="2.5" stroke-linecap="round" stroke-linejoin="round"/><path d="M220.3,1175.4 Q221.2,1180.8 226.2,1182.4 M247.3,1175.4 Q246.4,1180.8 241.4,1182.4 M220.2,1188.6 H226 M247.4,1188.6 H241.6 M220.3,1201 Q221.2,1195.6 226.2,1194.2 M247.3,1201 Q246.4,1195.6 241.4,1194.2" fill="none" stroke="#747789" stroke-width="2.4" stroke-linecap="round" stroke-linejoin="round"/><path d="M223.6,1251.6 Q218.3,1250.8 218.3,1245.6 Q218.3,1240.5 223.9,1239.8 Q225.9,1233.5 233.5,1233.5 Q240.9,1233.5 242.7,1240 Q247.9,1240.7 247.9,1245.9 Q247.9,1251.6 241.9,1251.6 H229.8 V1244.2" fill="none" stroke="#747789" stroke-width="2.6" stroke-linecap="round" stroke-linejoin="round"/><path d="M226.3,1247.2 L229.8,1243.6 L233.3,1247.2" fill="none" stroke="#747789" stroke-width="2.6" stroke-linecap="round" stroke-linejoin="round"/><path d="M233.20,1284.10 L237.43,1292.78 L246.99,1294.12 L240.05,1300.82 L241.72,1310.33 L233.20,1305.80 L224.68,1310.33 L226.35,1300.82 L219.41,1294.12 L228.97,1292.78 Z" fill="none" stroke="#747789" stroke-width="2.5" stroke-linecap="round" stroke-linejoin="round"/><path d="M643.4,233 L635.4,241.1 L643.4,249.3" fill="none" stroke="#858896" stroke-width="3" stroke-linecap="round" stroke-linejoin="round"/><path d="M1001.2,508.4 L1010.9,517.6 L1020.6,508.4" fill="none" stroke="#2b78bd" stroke-width="3.3" stroke-linecap="round" stroke-linejoin="round"/><path d="M1505.3,500.4 V520 M1495.5,510.2 H1515.1" fill="none" stroke="#ffffff" stroke-width="3" stroke-linecap="round" stroke-linejoin="round"/><path d="M1924.8,508.6 L1932.6,515.4 L1940.4,508.6" fill="none" stroke="#17293a" stroke-width="3" stroke-linecap="round" stroke-linejoin="round"/><circle cx="2009.2" cy="499.4" r="3.1" fill="#17293a"/><circle cx="2009.2" cy="510" r="3.1" fill="#17293a"/><circle cx="2009.2" cy="520.7" r="3.1" fill="#17293a"/><path d="M661,688.3 H672.2" fill="none" stroke="#ffffff" stroke-width="3.2" stroke-linecap="round" stroke-linejoin="round"/><circle cx="1645.5" cy="688.1" r="10.4" fill="none" stroke="#14283a" stroke-width="2.1"/><path d="M1643.3,683.4 V692.8 M1647.9,683.4 V692.8" fill="none" stroke="#14283a" stroke-width="2.3" stroke-linecap="round" stroke-linejoin="round"/><circle cx="1835.6" cy="688" r="10.4" fill="none" stroke="#14283a" stroke-width="2.1"/><path d="M1832.6,683.4 L1840,688 L1832.6,692.6 Z" fill="none" stroke="#14283a" stroke-width="2.1" stroke-linecap="round" stroke-linejoin="round"/><path d="M1998.4,682.6 H2017.4 M2003.2,682.4 V680.3 Q2003.2,677.8 2005.7,677.8 H2010.2 Q2012.7,677.8 2012.7,680.3 V682.4 M2000.6,683 V695.6 Q2000.6,698.4 2003.4,698.4 H2012.3 Q2015.1,698.4 2015.1,695.6 V683" fill="none" stroke="#14283a" stroke-width="2.1" stroke-linecap="round" stroke-linejoin="round"/><circle cx="1996.9" cy="771.0" r="3.05" fill="#76798a"/><circle cx="1996.9" cy="781.8" r="3.05" fill="#76798a"/><circle cx="1996.9" cy="792.6" r="3.05" fill="#76798a"/><circle cx="1996.9" cy="858.5" r="3.05" fill="#76798a"/><circle cx="1996.9" cy="869.3" r="3.05" fill="#76798a"/><circle cx="1996.9" cy="880.1" r="3.05" fill="#76798a"/><circle cx="1996.9" cy="946.0" r="3.05" fill="#76798a"/><circle cx="1996.9" cy="956.8" r="3.05" fill="#76798a"/><circle cx="1996.9" cy="967.6" r="3.05" fill="#76798a"/><circle cx="1996.9" cy="1033.5" r="3.05" fill="#76798a"/><circle cx="1996.9" cy="1044.3" r="3.05" fill="#76798a"/><circle cx="1996.9" cy="1055.1" r="3.05" fill="#76798a"/><circle cx="1996.9" cy="1121.0" r="3.05" fill="#76798a"/><circle cx="1996.9" cy="1131.8" r="3.05" fill="#76798a"/><circle cx="1996.9" cy="1142.6" r="3.05" fill="#76798a"/><circle cx="1996.9" cy="1208.5" r="3.05" fill="#76798a"/><circle cx="1996.9" cy="1219.3" r="3.05" fill="#76798a"/><circle cx="1996.9" cy="1230.1" r="3.05" fill="#76798a"/><path d="M661.4,955.0999999999999 L665,959.1999999999999 L672,951.5999999999999" fill="none" stroke="#ffffff" stroke-width="3.5" stroke-linecap="round" stroke-linejoin="round"/><path d="M661.4,1042.5 L665,1046.6000000000001 L672,1039.0" fill="none" stroke="#ffffff" stroke-width="3.5" stroke-linecap="round" stroke-linejoin="round"/></svg>
<div class="r" style="left:1.8px;top:1.8px;width:2208.4px;height:1306.4px;border-radius:12px;box-shadow:0 0 0 30px #e6e6e8;"></div><div class="r" style="left:2208px;top:0px;width:4px;height:7.6px;background:#000;border-radius:0px;"></div><div class="r" style="left:2208px;top:1304px;width:4px;height:6px;background:#000;border-radius:0px;"></div>
</body></html>
